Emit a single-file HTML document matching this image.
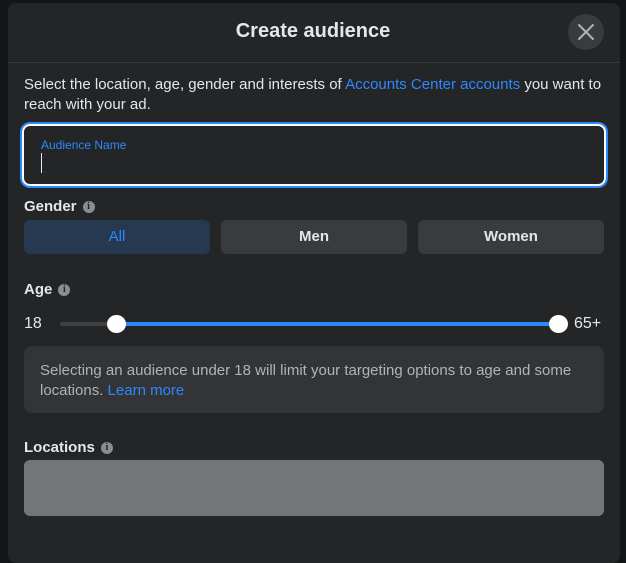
<!DOCTYPE html>
<html><head><style>
*{margin:0;padding:0;box-sizing:border-box}
body{width:626px;height:547px;background:#141516;font-family:"Liberation Sans",sans-serif;position:relative;overflow:hidden;color:#e4e6eb}
.m{position:absolute;left:8px;top:3px;width:612px;height:560px;background:#242526;border-radius:8px}
.abs{position:absolute}
.info{display:inline-block;width:12px;height:12px;border-radius:50%;background:#8a8d91;color:#242526;font-size:10px;font-weight:bold;text-align:center;line-height:12px;vertical-align:middle;margin-left:6px;font-family:"Liberation Serif",serif}
.lbl{font-size:15px;font-weight:bold;color:#e4e6eb}
.btn{position:absolute;top:220px;height:34px;width:186px;border-radius:6px;background:#3a3b3c;font-size:15px;font-weight:bold;text-align:center;line-height:34px;color:#e4e6eb}
a{color:#2d88ff;text-decoration:none}
</style></head><body>
<div class="m"></div>
<div class="abs" style="left:8px;top:62px;width:612px;height:1px;background:#393a3b"></div>
<div class="abs" style="left:0;top:20px;width:626px;text-align:center;font-size:20px;font-weight:bold">Create audience</div>
<div class="abs" style="left:568px;top:14px;width:36px;height:36px;border-radius:50%;background:#3a3b3c">
<svg width="36" height="36" viewBox="0 0 36 36"><path d="M11 11L25 25M25 11L11 25" stroke="#b0b3b8" stroke-width="2" stroke-linecap="round"/></svg></div>
<div class="abs" style="left:24px;top:75px;width:590px;font-size:15px;line-height:20px">Select the location, age, gender and interests of <a>Accounts Center accounts</a> you want to reach with your ad.</div>
<div class="abs" style="left:22px;top:124px;width:584px;height:62px;border:2px solid #fff;border-radius:8px;box-shadow:0 0 0 2px #2d88ff"></div>
<div class="abs" style="left:41px;top:138px;font-size:12px;color:#2d88ff">Audience Name</div>
<div class="abs" style="left:41px;top:153px;width:1px;height:20px;background:#e4e6eb"></div>
<div class="abs lbl" style="left:24px;top:198px">Gender<span class="info">i</span></div>
<div class="btn" style="left:24px;background:#263951;color:#2d88ff;font-weight:normal">All</div>
<div class="btn" style="left:221px">Men</div>
<div class="btn" style="left:418px">Women</div>
<div class="abs lbl" style="left:24px;top:281px">Age<span class="info">i</span></div>
<div class="abs" style="left:24px;top:315px;font-size:16px">18</div>
<div class="abs" style="left:574px;top:315px;font-size:16px">65+</div>
<div class="abs" style="left:60px;top:322px;width:60px;height:4px;background:#3e4042;border-radius:2px"></div>
<div class="abs" style="left:116px;top:322px;width:442px;height:4px;background:#2d88ff"></div>
<div class="abs" style="left:107px;top:315px;width:19px;height:18px;border-radius:50%;background:#fff"></div>
<div class="abs" style="left:549px;top:315px;width:19px;height:18px;border-radius:50%;background:#fff"></div>
<div class="abs" style="left:24px;top:346px;width:580px;height:67px;background:#333436;border-radius:8px;padding:15px 16px;font-size:15px;line-height:20px;color:#b0b3b8">Selecting an audience under 18 will limit your targeting options to age and some locations. <a>Learn more</a></div>
<div class="abs lbl" style="left:24px;top:439px">Locations<span class="info">i</span></div>
<div class="abs" style="left:24px;top:460px;width:580px;height:56px;background:#737678;border-radius:6px"></div>
</body></html>
